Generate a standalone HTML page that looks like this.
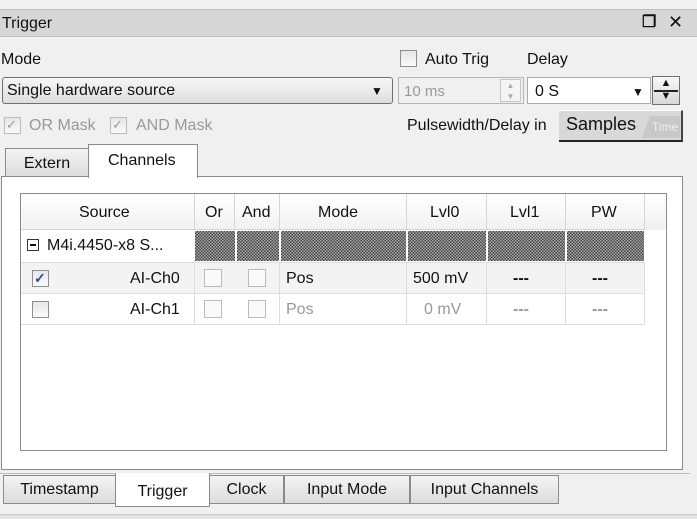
<!DOCTYPE html>
<html><head><meta charset="utf-8"><style>
*{box-sizing:border-box;margin:0;padding:0}
body{width:697px;height:519px;background:#f0f0f0;font-family:"Liberation Sans",sans-serif;font-size:16px;color:#111;position:relative;overflow:hidden}
.a{position:absolute}
.t{position:absolute;white-space:nowrap;line-height:20px}
.cb{position:absolute;width:15px;height:15px;border:1px solid #8e8f8f;background:linear-gradient(#e6e6e6,#fafafa)}
.g{color:#999}
.hatch{background:repeating-conic-gradient(#444 0 25%,#aaa 0 50%) 0 0/3px 3px}
.cell{position:absolute;border-right:1px solid #d6d6d6;border-bottom:1px solid #d6d6d6}
.tab{position:absolute;border:1px solid #8a8a8a;background:linear-gradient(#f4f4f4,#dcdcdc);text-align:center;line-height:28px}
</style></head><body>
<div class="a" style="left:0;top:9px;width:697px;height:28px;background:#d6d6d6;border-top:1px solid #c0c0c0;border-bottom:1px solid #c0c0c0"></div>
<div class="t" style="left:2px;top:14px">Trigger</div>
<div class="t" style="left:642px;top:13px;font-weight:bold">&#x2750;</div>
<div class="t" style="left:668px;top:12px;font-size:18px">✕</div>

<div class="t" style="left:1px;top:50px">Mode</div>
<div class="cb" style="left:400px;top:50px;width:17px;height:17px"></div>
<div class="t" style="left:425px;top:50px">Auto Trig</div>
<div class="t" style="left:527px;top:50px">Delay</div>

<div class="a" style="left:2px;top:77px;width:391px;height:27px;border:1px solid #707070;border-radius:3px;background:linear-gradient(#f6f6f6,#dedede)"></div>
<div class="t" style="left:7px;top:81px">Single hardware source</div>
<div class="t" style="left:371px;top:81px;font-size:12px">▼</div>

<div class="a" style="left:398px;top:77px;width:126px;height:27px;border:1px solid #b5b5b5;background:#f0f0f0"></div>
<div class="t g" style="left:404px;top:82px;font-size:15px">10 ms</div>
<div class="a" style="left:500px;top:79px;width:21px;height:23px;border:1px solid #c5c5c5;background:#f4f4f4;font-size:8px;color:#aaa;text-align:center;line-height:11px">▲<br>▼</div>

<div class="a" style="left:527px;top:77px;width:124px;height:27px;border:1px solid #ababab;background:#fff"></div>
<div class="t" style="left:535px;top:82px">0 S</div>
<div class="t" style="left:632px;top:82px;font-size:12px">▼</div>
<div class="a" style="left:652px;top:76px;width:28px;height:29px;border:1px solid #707070;background:linear-gradient(#f8f8f8,#d8d8d8);font-size:11px;text-align:center;line-height:13px">▲<br>▼</div>
<div class="a" style="left:654px;top:90px;width:24px;height:2px;background:#222"></div>

<div class="cb" style="left:4px;top:117px;border-color:#bbb;width:17px;height:17px"></div><div class="t g" style="left:6px;top:115px;font-size:13px">✓</div>
<div class="t g" style="left:29px;top:116px">OR Mask</div>
<div class="cb" style="left:110px;top:117px;border-color:#bbb;width:17px;height:17px"></div><div class="t g" style="left:112px;top:115px;font-size:13px">✓</div>
<div class="t g" style="left:136px;top:116px">AND Mask</div>
<div class="t" style="left:407px;top:116px">Pulsewidth/Delay in</div>
<div class="a" style="left:559px;top:110px;width:124px;height:32px;background:#d8d8d8;border-bottom:2px solid #222;border-right:2px solid #444;border-top:1px solid #fff"></div>
<div class="t" style="left:566px;top:114px;font-size:18px">Samples</div>
<div class="a" style="left:640px;top:116px;width:40px;height:22px;background:linear-gradient(110deg,transparent 20%,#c8c8c8 22%);color:#eee;font-size:12px;line-height:22px;padding-left:12px">Time</div>

<div class="tab" style="left:5px;top:148px;width:84px;height:29px;line-height:30px">Extern</div>
<div class="a" style="left:1px;top:176px;width:682px;height:294px;background:#fff;border:1px solid #8a8a8a"></div>
<div class="a" style="left:88px;top:144px;width:110px;height:34px;background:#fff;border:1px solid #8a8a8a;border-bottom:none"></div>
<div class="t" style="left:108px;top:151px">Channels</div>

<div class="a" style="left:20px;top:193px;width:647px;height:258px;border:1px solid #8a8a8a;background:#fff"></div>
<div class="a" style="left:21px;top:194px;width:645px;height:36px;background:linear-gradient(#fff,#f1f1f1)"></div>
<div class="cell" style="left:21px;top:194px;width:174px;height:36px"></div>
<div class="cell" style="left:195px;top:194px;width:40px;height:36px"></div>
<div class="cell" style="left:235px;top:194px;width:45px;height:36px"></div>
<div class="cell" style="left:280px;top:194px;width:127px;height:36px"></div>
<div class="cell" style="left:407px;top:194px;width:80px;height:36px"></div>
<div class="cell" style="left:487px;top:194px;width:79px;height:36px"></div>
<div class="cell" style="left:566px;top:194px;width:79px;height:36px"></div>
<div class="t" style="left:79px;top:203px">Source</div>
<div class="t" style="left:205px;top:203px">Or</div>
<div class="t" style="left:242px;top:203px">And</div>
<div class="t" style="left:318px;top:203px">Mode</div>
<div class="t" style="left:430px;top:203px">Lvl0</div>
<div class="t" style="left:510px;top:203px">Lvl1</div>
<div class="t" style="left:591px;top:203px">PW</div>

<div class="a" style="left:27px;top:239px;width:12px;height:12px;border:1px solid #333"></div>
<div class="a" style="left:30px;top:244px;width:6px;height:2px;background:#111"></div>
<div class="t" style="left:47px;top:236px">M4i.4450-x8 S...</div>
<div class="a hatch" style="left:195px;top:231px;width:40px;height:30px"></div>
<div class="a hatch" style="left:237px;top:231px;width:42px;height:30px"></div>
<div class="a hatch" style="left:281px;top:231px;width:125px;height:30px"></div>
<div class="a hatch" style="left:408px;top:231px;width:78px;height:30px"></div>
<div class="a hatch" style="left:488px;top:231px;width:77px;height:30px"></div>
<div class="a hatch" style="left:567px;top:231px;width:77px;height:30px"></div>

<div class="a" style="left:21px;top:262px;width:624px;height:32px;background:#f3f3f3;border-top:1px solid #ddd;border-bottom:1px solid #ddd"></div>
<div class="a" style="left:21px;top:294px;width:624px;height:31px;border-bottom:1px solid #ddd"></div>
<div class="a" style="left:194px;top:262px;width:1px;height:63px;background:#ddd"></div>
<div class="a" style="left:279px;top:262px;width:1px;height:63px;background:#ddd"></div>
<div class="a" style="left:406px;top:262px;width:1px;height:63px;background:#ddd"></div>
<div class="a" style="left:486px;top:262px;width:1px;height:63px;background:#ddd"></div>
<div class="a" style="left:565px;top:262px;width:1px;height:63px;background:#ddd"></div>
<div class="a" style="left:644px;top:262px;width:1px;height:63px;background:#ddd"></div>

<div class="cb" style="left:32px;top:270px;width:17px;height:17px"></div><div class="t" style="left:34px;top:268px;font-size:14px;color:#2a4a9a;font-weight:bold">✓</div>
<div class="t" style="left:130px;top:269px">AI-Ch0</div>
<div class="cb" style="left:204px;top:269px;width:18px;height:18px;border-color:#bbb;background:#fafafa"></div>
<div class="cb" style="left:248px;top:269px;width:18px;height:18px;border-color:#bbb;background:#fafafa"></div>
<div class="t" style="left:286px;top:269px">Pos</div>
<div class="t" style="left:413px;top:269px">500 mV</div>
<div class="t" style="left:513px;top:269px;font-weight:bold">---</div>
<div class="t" style="left:592px;top:269px;font-weight:bold">---</div>

<div class="cb" style="left:32px;top:301px;width:17px;height:17px"></div>
<div class="t" style="left:130px;top:300px">AI-Ch1</div>
<div class="cb" style="left:204px;top:300px;width:18px;height:18px;border-color:#bbb;background:#fafafa"></div>
<div class="cb" style="left:248px;top:300px;width:18px;height:18px;border-color:#bbb;background:#fafafa"></div>
<div class="t g" style="left:286px;top:300px">Pos</div>
<div class="t g" style="left:424px;top:300px">0 mV</div>
<div class="t g" style="left:513px;top:300px;font-weight:bold">---</div>
<div class="t g" style="left:592px;top:300px;font-weight:bold">---</div>

<div class="a" style="left:0;top:473px;width:690px;height:1px;background:#bbb"></div>
<div class="tab" style="left:3px;top:475px;width:113px;height:29px">Timestamp</div>
<div class="tab" style="left:209px;top:475px;width:75px;height:29px">Clock</div>
<div class="tab" style="left:284px;top:475px;width:126px;height:29px">Input Mode</div>
<div class="tab" style="left:410px;top:475px;width:149px;height:29px">Input Channels</div>
<div class="tab" style="left:115px;top:473px;width:95px;height:34px;background:#fff;border-top:none;line-height:38px">Trigger</div>
<div class="a" style="left:0;top:514px;width:697px;height:5px;background:#e4e4e4;border-top:1px solid #ccc"></div>
</body></html>
